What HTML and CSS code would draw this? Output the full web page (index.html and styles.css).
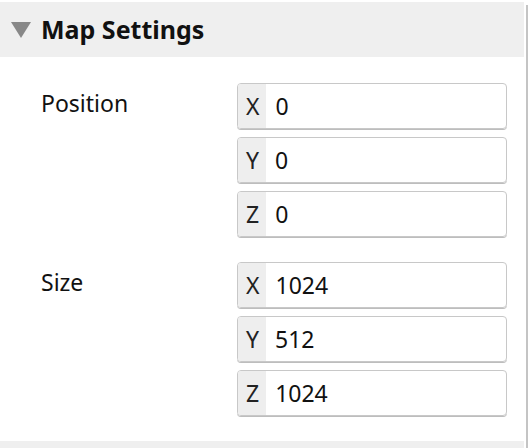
FILE: index.html
```html
<!DOCTYPE html>
<html>
<head>
<meta charset="utf-8">
<link rel="stylesheet" href="styles.css">
</head>
<body>
<div class="page">
  <div class="panel">
    <div class="section-header">
      <svg class="caret" width="20" height="16" viewBox="0 0 20 16"><polygon points="0,0 20,0 10,16" fill="#888"/></svg>
      <span class="title">Map Settings</span>
    </div>
    <div class="section-body">
      <div class="group">
        <div class="label">Position</div>
        <div class="fields">
          <div class="field"><span class="axis">X</span><span class="value">0</span></div>
          <div class="field"><span class="axis">Y</span><span class="value">0</span></div>
          <div class="field"><span class="axis">Z</span><span class="value">0</span></div>
        </div>
      </div>
      <div class="group">
        <div class="label">Size</div>
        <div class="fields">
          <div class="field"><span class="axis">X</span><span class="value">1024</span></div>
          <div class="field"><span class="axis">Y</span><span class="value">512</span></div>
          <div class="field"><span class="axis">Z</span><span class="value">1024</span></div>
        </div>
      </div>
    </div>
    <div class="section-next"></div>
  </div>
  <div class="scrollbar"></div>
</div>
</body>
</html>
```
FILE: styles.css
```css
html, body {
  margin: 0;
  padding: 0;
  background: #ffffff;
}
body {
  font-family: "Noto Sans", "Open Sans", sans-serif;
  color: #111;
  width: 530px;
  height: 448px;
  overflow: hidden;
}
.page {
  display: flex;
  height: 448px;
}
.panel {
  width: 524px;
  flex-shrink: 0;
  padding-top: 2px;
  display: flex;
  flex-direction: column;
}
.scrollbar {
  width: 2px;
  flex-shrink: 0;
  margin-left: 2px;
  margin-top: 5px;
  background: #c4c4c4;
}
.section-header {
  height: 55px;
  flex-shrink: 0;
  background: #efefef;
  display: flex;
  align-items: center;
  padding-left: 11px;
  box-sizing: border-box;
}
.caret {
  display: block;
  flex-shrink: 0;
  margin-top: 1px;
}
.title {
  margin-left: 10px;
  font-weight: 700;
  font-size: 25px;
  line-height: 30px;
  color: #111;
  margin-top: -1px;
}
.section-body {
  flex-shrink: 0;
  padding: 26px 0 0 41px;
  display: flex;
  flex-direction: column;
  gap: 25px;
}
.group {
  display: flex;
}
.label {
  width: 196px;
  flex-shrink: 0;
  font-size: 23px;
  padding-top: 5px;
  line-height: 30px;
  color: #111;
}
.fields {
  display: flex;
  flex-direction: column;
  gap: 8px;
}
.field {
  width: 270px;
  height: 46px;
  flex-shrink: 0;
  box-sizing: border-box;
  border: 1px solid #c8c8c8;
  border-radius: 4px;
  box-shadow: 0 1px 0 #bdbdbd;
  display: flex;
  align-items: stretch;
  overflow: hidden;
  font-size: 23px;
}
.axis {
  background: #eeeeee;
  padding: 0 7px 0 8px;
  display: flex;
  align-items: center;
  color: #222;
}
.value {
  padding-left: 9px;
  display: flex;
  align-items: center;
  color: #111;
}
.section-next {
  flex-shrink: 0;
  margin-top: 25px;
  height: 10px;
  background: #efefef;
}
```
